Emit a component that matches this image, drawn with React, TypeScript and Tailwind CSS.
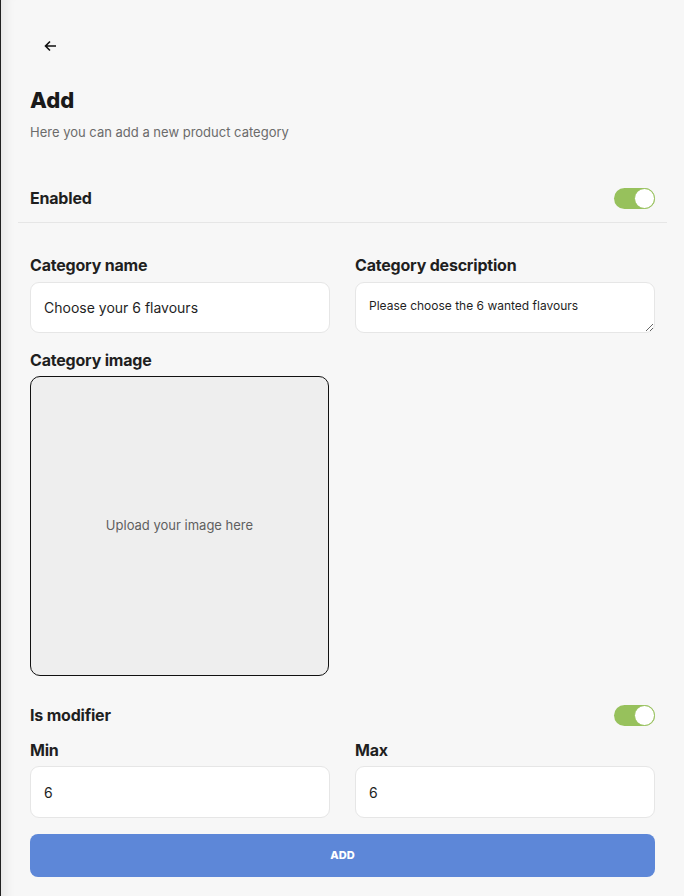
import { useState } from "react";

function Toggle({ on, onChange }: { on: boolean; onChange: () => void }) {
  return (
    <button
      onClick={onChange}
      className={`relative h-[21px] w-[41px] rounded-full ${on ? "bg-[#97c15c]" : "bg-[#d4d4d4]"}`}
    >
      <span
        className={`absolute top-0 h-[21px] w-[21px] rounded-full border border-[#97c15c] bg-white ${on ? "right-0" : "left-0"}`}
      />
    </button>
  );
}

function Label({ children }: { children: React.ReactNode }) {
  return <p className="text-[16px] font-bold leading-[20px] tracking-[-0.2px] text-[#1f1f1f]">{children}</p>;
}

export default function App() {
  const [enabled, setEnabled] = useState(true);
  const [modifier, setModifier] = useState(true);

  return (
    <div
      className="min-h-[896px] border-l border-[#222] bg-[#f7f7f7] px-[29px] pb-6 shadow-[inset_14px_0_12px_-10px_rgba(0,0,0,0.07)]"
      style={{ fontFamily: "Inter, 'Noto Sans', sans-serif" }}
    >
      <div className="pt-[38px]">
        <button className="ml-[14px] flex h-4 items-center text-[#111]">
          <svg width="13" height="12" viewBox="0 0 13 12" fill="none" stroke="currentColor" strokeWidth="1.6">
            <path d="M12 6H1.5M6 1.5 1.5 6 6 10.5" />
          </svg>
        </button>
      </div>

      <h1 className="mt-[32px] text-[22px] font-extrabold leading-[28px] text-[#1a1a1a]">Add</h1>
      <p className="mt-[9px] text-[13px] leading-[18px] text-[#6b6b6b]">Here you can add a new product category</p>

      <div className="mt-[45px] flex h-6 items-center justify-between">
        <Label>Enabled</Label>
        <Toggle on={enabled} onChange={() => setEnabled(!enabled)} />
      </div>
      <div className="-mx-[12px] mt-[12px] border-t border-[#e6e6e6]" />

      <div className="mt-[32px] grid grid-cols-2 gap-x-[25px]">
        <div>
          <Label>Category name</Label>
          <input
            defaultValue="Choose your 6 flavours"
            className="mt-[7px] h-[51px] w-full rounded-[9px] border border-[#e6e6e6] bg-white px-[13px] text-[14px] text-[#1f1f1f] outline-none"
          />
        </div>
        <div>
          <Label>Category description</Label>
          <textarea
            defaultValue="Please choose the 6 wanted flavours"
            className="mt-[7px] block h-[51px] w-full rounded-[9px] border border-[#e6e6e6] bg-white px-[13px] pt-[15px] text-[12px] leading-[16px] text-[#1f1f1f] outline-none"
          />
        </div>
        <div className="mt-[17px]">
          <Label>Category image</Label>
          <div className="mt-[6px] flex h-[300px] w-[299px] items-center justify-center rounded-[10px] border border-[#111] bg-[#eeeeee]">
            <span className="text-[13px] text-[#5f5f5f]">Upload your image here</span>
          </div>
        </div>
      </div>

      <div className="mt-[27px] flex h-6 items-center justify-between">
        <Label>Is modifier</Label>
        <Toggle on={modifier} onChange={() => setModifier(!modifier)} />
      </div>

      <div className="mt-[13px] grid grid-cols-2 gap-x-[25px]">
        <div>
          <Label>Min</Label>
          <input
            defaultValue="6"
            className="mt-[6px] h-[52px] w-full rounded-[9px] border border-[#e6e6e6] bg-white px-[13px] text-[14px] text-[#1f1f1f] outline-none"
          />
        </div>
        <div>
          <Label>Max</Label>
          <input
            defaultValue="6"
            className="mt-[6px] h-[52px] w-full rounded-[9px] border border-[#e6e6e6] bg-white px-[13px] text-[14px] text-[#1f1f1f] outline-none"
          />
        </div>
      </div>

      <button className="mt-[16px] flex h-[43px] w-full items-center justify-center rounded-[8px] bg-[#5d87d8] text-[11px] font-extrabold text-white">
        ADD
      </button>
    </div>
  );
}
